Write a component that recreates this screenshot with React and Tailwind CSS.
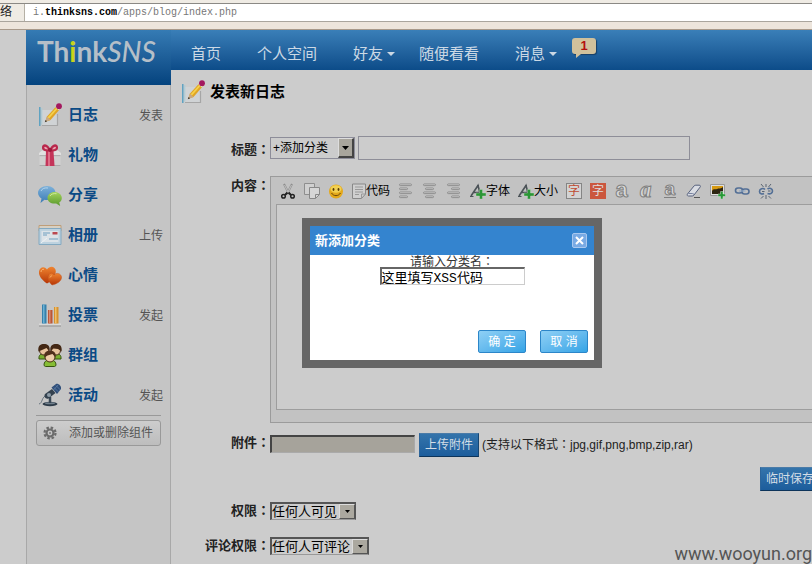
import React from "react";

const NoteIcon = () => (
  <svg className="size-6 shrink-0" viewBox="0 0 24 24" fill="none">
    <path d="M4 7h14l2 13-1 2.500H4z" fill="#d0d3d5" />
    <path d="M4 22.500h15.500V11" stroke="#a6a6a6" strokeWidth="1.200" />
    <path d="M1.800 4v19" stroke="#4d9cc0" strokeWidth="1.300" />
    <path d="M3.800 5v16.500" stroke="#a9cbd8" strokeWidth="1" />
    <path d="M7 19l2-5.500L19 2.500l3.500 3L12.500 17z" fill="#e0a526" />
    <path d="M9.500 14.500L19.500 3.500l1.200 1L11 15.500z" fill="#f6d24a" />
    <path d="M7 19l2-5.500 3.500 3.500z" fill="#c9a882" />
    <path d="M6.800 19.300l.8-2.300 1.500 1.300z" fill="#333" />
    <path d="M18 3.700l3.300 3" stroke="#d8d8d8" strokeWidth="1.600" />
    <circle cx="21" cy="3.200" r="2.900" fill="#a3185f" />
  </svg>
);

const GiftIcon = () => (
  <svg className="size-6 shrink-0" viewBox="0 0 24 24">
    <path d="M1 10l3-2.500h16L23 10v2.500H1z" fill="#e0e0e0" />
    <path d="M1.500 12h21v11h-21z" fill="#d0d0d0" />
    <path d="M1.500 12h21v1.200h-21z" fill="#b0b0b0" />
    <path d="M1.500 22h21v1h-21z" fill="#aaa" />
    <path d="M8 8h7.500l1 15h-9z" fill="#c4355a" />
    <path d="M10 8h2v15h-2z" fill="#dd6f88" />
    <path d="M12 8.500C8 9 3.500 8 4 4 4.500.5 9 0 12 5.500 15 0 19.500.5 20 4c.5 4-4 5-8 4.500z" fill="#b9284c" />
    <path d="M10 6.500c-2 0-4-.6-3.800-2.200.2-1.400 2.800-.6 3.800 2.200zM14.200 6.500c2 0 4-.6 3.800-2.200-.2-1.400-2.800-.6-3.800 2.200z" fill="#e9a5b2" />
    <circle cx="12" cy="6.800" r="2.100" fill="#9c1a3b" />
  </svg>
);

const ShareIcon = () => (
  <svg className="size-6 shrink-0" viewBox="0 0 24 24">
    <defs>
      <linearGradient id="bubbleBlue" x2="0" y2="1"><stop stopColor="#7db1da" /><stop offset="1" stopColor="#3b7bb5" /></linearGradient>
      <linearGradient id="bubbleGreen" x2="0" y2="1"><stop stopColor="#a5d35c" /><stop offset="1" stopColor="#57982c" /></linearGradient>
    </defs>
    <path d="M9 3c5 0 8.500 3 8.500 7S14 17 9 17c-1 0-1.800-.1-2.500-.3L2.500 20l1-4.500C1.500 14.200 0 12.200 0 10c0-4 4-7 9-7z" fill="url(#bubbleBlue)" />
    <path d="M16.500 9c4 0 7.300 2.600 7.300 6 0 2-1 3.500-2.600 4.600l1 3.400-4-2.400h-1.700c-4 0-7-2.300-7-5.600s3-6 7-6z" fill="url(#bubbleGreen)" />
    <path d="M3 8c1-2.500 4-3.500 7-3" stroke="#b4d3ea" fill="none" />
    <path d="M12 13c1-2 4-2.800 6.500-2.300" stroke="#cce99a" fill="none" />
  </svg>
);

const AlbumIcon = () => (
  <svg className="size-6 shrink-0" viewBox="0 0 24 24" fill="none">
    <path d="M1 2.500h22V8H1z" fill="#d7d0c3" stroke="#bf9e79" />
    <path d="M1 5.500h22v16H1z" fill="#bdd2df" stroke="#83a9c1" />
    <path d="M3.500 8h17v11h-17z" fill="#dce3e8" />
    <path d="M14.500 9h5v2.500h-5z" fill="#bb4850" />
    <path d="M5 10h7M5 12h4M11 16h9" stroke="#6f9fc0" />
    <path d="M3 20L9 15" stroke="#edf2f5" />
  </svg>
);

const MoodIcon = () => (
  <svg className="size-6 shrink-0" viewBox="0 0 24 24">
    <defs>
      <linearGradient id="heart" x2="0" y2="1"><stop stopColor="#ef8430" /><stop offset="1" stopColor="#b63606" /></linearGradient>
    </defs>
    <path d="M9 20.500C4 17 .5 13 1 8.500 1.500 4.500 6 2.500 9 6.500 12 2 17.500 3.500 17.800 8c.2 4-4 10-8.800 12.500z" fill="url(#heart)" />
    <path d="M14 22c-3-3-5-6-3.500-9.500 1-2.700 4-3 5.500-.5 2.500-3 7-1.500 7.500 2 .3 4-4.500 7-9.500 8z" fill="url(#heart)" stroke="#c2501a" strokeWidth=".5" />
    <path d="M3 9c0-2 1.500-3 3-2.700M12 14.500c.3-1.200 1-1.700 2-1.500" stroke="#f8b06e" fill="none" />
  </svg>
);

const VoteIcon = () => (
  <svg className="size-6 shrink-0" viewBox="0 0 24 24">
    <path d="M1 20.500h22v2H1z" fill="#d9d9d9" />
    <path d="M1 22.500h22v1H1z" fill="#8f8f8f" />
    <path d="M4 1.500h4.500v19H4z" fill="#3581ad" />
    <path d="M5 1.500h1.500v19H5z" fill="#6db0d1" />
    <path d="M10 7h4.500v13.500H10z" fill="#bb5638" />
    <path d="M11 7h1.500v13.500H11z" fill="#d88b70" />
    <path d="M16 4h4.500v16.500H16z" fill="#d8922f" />
    <path d="M17 4h1.500v16.500H17z" fill="#edbf6c" />
  </svg>
);

const GroupIcon = () => (
  <svg className="size-6 shrink-0" viewBox="0 0 24 24">
    <path d="M1 16c-.5-4 2-5.500 5-5.500s5 1.500 5 5.500zM13 16c0-4 2-5.500 5-5.500s5.500 1.500 5 5.500z" fill="#79ae2e" stroke="#36540f" />
    <circle cx="6" cy="7.500" r="4.500" fill="#e8c39c" stroke="#4a2d19" />
    <circle cx="18" cy="7.500" r="4.500" fill="#e8c39c" stroke="#4a2d19" />
    <path d="M.5 8.500C-.5 3.500 2 1 6 1s6.500 2.500 5.500 7L8.500 5 4 7zM12.500 8c-1-4.500 1.500-7 5.500-7s6.500 2.500 5.500 7.500L20 6l-4.500-.5z" fill="#432714" />
    <path d="M6 22.500c0-4 2-5.500 6-5.500s6 1.500 6 5.500l-1.500 1h-9z" fill="#86bd35" stroke="#36540f" />
    <circle cx="12" cy="14" r="5" fill="#efcda8" stroke="#4a2d19" />
    <path d="M6.500 14.500C5.500 9.500 8.500 7.500 12 7.500s6.500 2 5.500 7L14.500 11l-5 1.500z" fill="#51301a" />
  </svg>
);

const EventIcon = () => (
  <svg className="size-6 shrink-0" viewBox="0 0 24 24" fill="none">
    <ellipse cx="12" cy="21" rx="7.500" ry="2.200" fill="#2d3b49" />
    <ellipse cx="12" cy="20.300" rx="5" ry="1" fill="#71808d" />
    <path d="M12 20v-6" stroke="#3a4856" strokeWidth="2.500" />
    <path d="M1 21c4-1 2-7 8-9" stroke="#67737e" />
    <path d="M7 11l7-5 3.500 4-7 5.500c-3 1-5-2-3.500-4.500z" fill="#34424f" />
    <circle cx="11" cy="12" r="2" fill="#8f9da8" />
    <path d="M13.500 4.500L18 1c2-.8 5.500 1.500 5 5l-4 5z" fill="#2f4e79" />
    <path d="M16 4.500l4.500 4.500M18 2.500l4.500 4.500M15.500 7L20 2" stroke="#6485ac" strokeWidth=".7" />
  </svg>
);

const GearIcon = () => (
  <svg className="size-[14px] shrink-0" viewBox="0 0 14 14" fill="none">
    <circle cx="7" cy="7" r="5.500" stroke="#6c6c6c" strokeWidth="2.200" strokeDasharray="2.500 1.820" />
    <circle cx="7" cy="7" r="3.500" stroke="#6c6c6c" strokeWidth="2.200" />
    <circle cx="7" cy="7" r="1" fill="#777" />
  </svg>
);

const Caret = () => (
  <svg className="h-1 w-2" viewBox="0 0 8 4"><path d="M0 0h8L4 4z" fill="#cbd8e4" /></svg>
);

const Colon = () => <span className="font-['Noto_Sans_CJK_TC',sans-serif] leading-none">：</span>;

const menu = [
  { name: "日志", action: "发表", Icon: NoteIcon },
  { name: "礼物", Icon: GiftIcon },
  { name: "分享", Icon: ShareIcon },
  { name: "相册", action: "上传", Icon: AlbumIcon },
  { name: "心情", Icon: MoodIcon },
  { name: "投票", action: "发起", Icon: VoteIcon },
  { name: "群组", Icon: GroupIcon },
  { name: "活动", action: "发起", Icon: EventIcon },
];

function Tool({ label, text, children }) {
  return (
    <button type="button" aria-label={label} className="flex h-4 shrink-0 items-center text-[12px] leading-4 whitespace-nowrap text-black">
      {children}
      {text}
    </button>
  );
}

const Glyph = ({ children }) => (
  <svg className="size-4 shrink-0" viewBox="0 0 16 16" fill="none">{children}</svg>
);

const AlignGlyph = ({ x }) => (
  <Glyph>
    {[[1.5, 12], [5.5, 8], [9.5, 12], [13.5, 8]].map(([y, w], i) => (
      <rect key={i} x={w === 12 ? 1.5 : x} y={y - 0.5} width={w} height="1.600" rx=".8" stroke="#7d7d7d" fill="#d5d5d5" strokeWidth=".8" />
    ))}
  </Glyph>
);

const FontGlyph = () => (
  <Glyph>
    <path d="M1 13L8 2.500l2.500 9.500M4 9.500h5" stroke="#4c5358" strokeWidth="1.600" />
    <path d="M0 13.500h3.500M7 2.500h2" stroke="#4c5358" />
    <path d="M9.500 6.500h3V10H16v3h-3.500v3h-3v-3H6v-3h3.500z" fill="#2b9636" stroke="#c4d8c2" strokeWidth=".4" />
  </Glyph>
);

function Toolbar() {
  return (
    <div className="flex h-[27px] items-center gap-2 pl-1">
      <Tool label="剪切">
        <Glyph>
          <path d="M4 1l5 10M12 1L7 11" stroke="#8d8d8d" strokeWidth="2" />
          <path d="M4.500 2l4 8M11.500 2l-4 8" stroke="#d9d9d9" strokeWidth=".7" />
          <path d="M7.500 9.500L5 12M8.500 9.500L11 12" stroke="#222" strokeWidth="2" />
          <circle cx="3.500" cy="13.300" r="1.800" stroke="#222" strokeWidth="1.500" />
          <circle cx="12.500" cy="13.300" r="1.800" stroke="#222" strokeWidth="1.500" />
        </Glyph>
      </Tool>
      <Tool label="复制">
        <Glyph>
          <path d="M.5.500h10v11H.5z" fill="#d0d0d0" stroke="#8e8e8e" />
          <path d="M5.500 4.500h10v7l-4 4h-6z" fill="#d6d6d6" stroke="#888" />
          <path d="M15.500 11.500h-4v4" stroke="#888" />
        </Glyph>
      </Tool>
      <Tool label="表情">
        <Glyph>
          <circle cx="8" cy="8.500" r="7" fill="#e4a91c" />
          <ellipse cx="8" cy="6" rx="5.500" ry="3.800" fill="#f2d052" />
          <ellipse cx="5.500" cy="6.500" rx=".9" ry="1.400" fill="#563a08" />
          <ellipse cx="10.500" cy="6.500" rx=".9" ry="1.400" fill="#563a08" />
          <path d="M3.500 10c2 3.500 7 3.500 9 0" stroke="#704806" />
        </Glyph>
      </Tool>
      <Tool label="代码" text="代码">
        <svg className="h-4 w-[14px] shrink-0" viewBox="0 0 14 16" fill="none">
          <path d="M.5 1h13v10l-4 4.500h-9z" fill="#cfcfcf" stroke="#888" />
          <path d="M3 4h8M3 6.500h8M3 9h8M3 11.500h4M13.500 11h-4v4.500" stroke="#999" />
        </svg>
      </Tool>
      <Tool label="左对齐"><AlignGlyph x={1.5} /></Tool>
      <Tool label="居中"><AlignGlyph x={3.5} /></Tool>
      <Tool label="右对齐"><AlignGlyph x={5.5} /></Tool>
      <Tool label="字体" text="字体"><FontGlyph /></Tool>
      <Tool label="大小" text="大小"><FontGlyph /></Tool>
      <Tool label="文字颜色">
        <span className="flex size-4 items-center justify-center border border-[#858585] bg-[#d3d3d3] text-[12px] leading-3 text-[#bf4b32]">字</span>
      </Tool>
      <Tool label="背景颜色">
        <span className="flex size-4 items-center justify-center bg-[#cb573e] text-[12px] leading-3 text-[#ddd]">字</span>
      </Tool>
      <Tool label="粗体">
        <Glyph><text x="1.500" y="14" fontFamily="Liberation Sans" fontWeight="bold" fontSize="22" fill="#d8d8d8" stroke="#808080" strokeWidth="1">a</text></Glyph>
      </Tool>
      <Tool label="斜体">
        <Glyph><text x="2" y="14" fontFamily="Liberation Serif" fontStyle="italic" fontWeight="bold" fontSize="23" fill="#d8d8d8" stroke="#808080" strokeWidth="1">a</text></Glyph>
      </Tool>
      <Tool label="下划线">
        <Glyph>
          <text x="2.500" y="12" fontFamily="Liberation Sans" fontWeight="bold" fontSize="19" fill="#d8d8d8" stroke="#808080" strokeWidth="1">a</text>
          <path d="M2 14.500h12" stroke="#808080" />
        </Glyph>
      </Tool>
      <Tool label="清除格式">
        <Glyph>
          <path d="M1.500 11L8 3c.5-.6 1-.8 1.800-.8h3.400c1.300 0 1.600 1 .9 1.900L8 12c-.5.600-1 1-1.800 1H2.500c-1.300 0-1.700-1-1-2z" fill="#d9dce3" stroke="#56617d" />
          <path d="M2.500 10.500h4c1 0 1.500.5 1.200 1.300" stroke="#7782a0" />
          <path d="M8 14.500h6" stroke="#555" />
        </Glyph>
      </Tool>
      <Tool label="插入图片">
        <Glyph>
          <path d="M.5 1.500h14v11H.5z" fill="#ddd" stroke="#999" />
          <path d="M2 3h11v8H2z" fill="#d69a13" />
          <path d="M2 8c2-3 3-1 5-2s4 0 6-2v7H2z" fill="#2d2512" />
          <path d="M10.500 8.500h2.500V11h2.500v2.500H13V16h-2.500v-2.500H8V11h2.500z" fill="#279a37" stroke="#d3e2d0" strokeWidth=".5" />
        </Glyph>
      </Tool>
      <Tool label="链接">
        <Glyph>
          <rect x="1.500" y="5" width="7" height="5" rx="2.500" stroke="#536f96" strokeWidth="1.600" />
          <rect x="8" y="6" width="7" height="5" rx="2.500" stroke="#536f96" strokeWidth="1.600" />
          <path d="M5 8h6.500" stroke="#93aac6" strokeWidth="1.200" />
        </Glyph>
      </Tool>
      <Tool label="取消链接">
        <Glyph>
          <path d="M7 6.500C5 4.500 1.500 6 1.500 8.500S4 11.500 6 10.500M9.500 6c2-1.500 5-.5 5 2s-2.500 3.500-5 2.500" stroke="#536f96" strokeWidth="1.600" />
          <path d="M4 8.500h2.500M10 8h2.500M8 1v3M8 12v4M3 1l2.500 3M13 1l-2.500 3M3 15.500L5.500 13M13 15.500L10.500 13" stroke="#5b6572" />
        </Glyph>
      </Tool>
    </div>
  );
}

const Label = ({ id, children }) => (
  <label htmlFor={id} className="h-5 w-[99px] shrink-0 text-right text-[13px] leading-5 font-bold whitespace-nowrap text-[#222]">{children}<Colon /></label>
);

function SunkenSelect({ id, value, width }) {
  return (
    <div className={`relative h-[18px] border border-t-2 border-l-2 border-[#555] border-b-[#999] ${width}`}>
      <select id={id} className="block h-[15px] w-full appearance-none bg-[#cdcdcd] text-[13px] leading-[15px] text-black">
        <option>{value}</option>
      </select>
      <span className="pointer-events-none absolute top-0 right-0 flex h-[15px] w-4 items-center justify-center border border-t-[#ddd] border-r-[#555] border-b-[#555] border-l-[#ddd] bg-[#aba89f]">
        <svg className="h-[3px] w-[5px]" viewBox="0 0 5 3"><path d="M0 0h5L2.500 3z" fill="#000" /></svg>
      </span>
    </div>
  );
}

const blueButton = "h-6 shrink-0 border border-t-[#4a7ba8] border-r-[#174672] border-b-[#0c3359] border-l-[#2c659b] bg-linear-to-b from-[#3474ab] to-[#1c5d9c] text-[12px] leading-5 whitespace-nowrap text-[#d3dde6]";
const dialogButton = "h-[23px] w-12 rounded-xs border border-[#2c86c9] bg-linear-to-br from-[#8ed0f5] to-[#32a4e6] text-[12px] leading-5 text-white";

export default function App() {
  return (
    <div className="relative flex min-h-screen flex-col overflow-hidden bg-[#ccc] font-['Liberation_Sans','Noto_Sans_CJK_SC',sans-serif]">
      <div className="bg-[#efebe4] pt-[3px]">
        <div className="flex h-[19px] border-t border-b border-t-[#8b8985] border-b-[#aaa59d]">
          <span className="flex w-[25px] shrink-0 justify-end overflow-hidden border-r border-[#b5b0a5] pr-3 text-[12px] leading-[17px] whitespace-nowrap text-[#222]">网络</span>
          <div className="flex-1 bg-white pl-2 font-['Liberation_Mono',monospace] text-[10px] leading-[17px] text-[#777]">
            i.<span className="font-bold text-black">thinksns.com</span>/apps/blog/index.php
          </div>
        </div>
        <div className="h-[8px] border-b border-[#a8998a] bg-[#ede5dc]" />
      </div>

      <div className="flex flex-1 pl-[26px]">
        <aside className="flex w-[145px] shrink-0 flex-col">
          <div className="h-[55px] bg-linear-to-b from-[#357bb4] to-[#04437e] pl-[11px]">
            <a href="#" className="font-['Lato',sans-serif] text-[28px] leading-[42px] font-bold whitespace-nowrap text-[#b5bfc8]">
              Th<span className="text-[#c8d41c]">i</span>nk<span className="font-medium italic">SNS</span>
            </a>
          </div>
          <nav className="flex-1 border-r border-l border-[#a8a8a8] bg-[#c5c5c5] px-[9px] pt-[10px]">
            {menu.map(({ name, action, Icon }) => (
              <div key={name} className="flex h-10 items-center pl-0.5">
                <Icon />
                <a href="#" className="ml-[6px] text-[15px] leading-5 font-bold text-[#0b4a85]">{name}</a>
                {action && <a href="#" className="-mr-[2px] ml-auto pt-0.5 text-[12px] leading-5 text-[#555]">{action}</a>}
              </div>
            ))}
            <div className="mb-1 border-t border-[#999]" />
            <button type="button" className="flex h-[26px] w-full items-center rounded-[3px] border border-[#999] bg-linear-to-b from-[#cdcdcd] to-[#bdbdbd] pl-[6px] text-[12px] whitespace-nowrap text-[#555]">
              <GearIcon />
              <span className="ml-[12px]">添加或删除组件</span>
            </button>
          </nav>
        </aside>

        <main className="min-w-0 flex-1">
          <nav className="flex h-10 items-center bg-linear-to-b from-[#3a7fb8] to-[#0c4c89] pt-2 pl-5 text-[15px] leading-5 whitespace-nowrap text-[#ccd9e5]">
            <a href="#" className="pr-9">首页</a>
            <a href="#" className="pr-9">个人空间</a>
            <a href="#" className="flex items-center gap-1 pr-6">好友<Caret /></a>
            <a href="#" className="pr-9">随便看看</a>
            <a href="#" className="flex items-center gap-1 pr-[15px]">消息<Caret /></a>
            <span className="relative mb-4 h-4 w-6 rounded-[3px] bg-[#d1c19c] text-center font-['Liberation_Sans'] text-[13px] leading-4 font-bold text-[#b40e0e] shadow-[1px_1px_1px_#173f66]">
              1
              <svg className="absolute top-4 left-1 h-1 w-[5px]" viewBox="0 0 5 4"><path d="M0 0h5L0 4z" fill="#d1c19c" /></svg>
            </span>
          </nav>

          <h1 className="flex items-center gap-[5px] pt-[10px] pl-[10px] text-[15px] leading-6 font-bold text-black">
            <NoteIcon />
            发表新日志
          </h1>

          <form className="pt-8" onSubmit={(e) => e.preventDefault()}>
            <div className="flex items-end">
              <Label id="title">标题</Label>
              <div className="relative mb-px h-[22px] w-[85px] shrink-0 border border-[#8d8d99]">
                <select aria-label="分类" className="block h-5 w-full appearance-none bg-transparent pl-0.5 text-[12px] leading-5 text-black">
                  <option>+添加分类</option>
                </select>
                <span className="pointer-events-none absolute top-0 right-0 flex h-5 w-4 items-center justify-center border border-t-[#ddd] border-r-2 border-r-[#444] border-b-2 border-b-[#444] border-l-[#ddd] bg-[#a8a59c]">
                  <svg className="h-1 w-[7px]" viewBox="0 0 7 4"><path d="M0 0h7L3.500 4z" fill="#000" /></svg>
                </span>
              </div>
              <input id="title" className="ml-[3px] h-6 w-[332px] border border-[#8e8e98] bg-transparent px-1 text-[12px]" />
            </div>

            <div className="mt-4 flex items-start">
              <Label id="content">内容</Label>
              <div className="h-[247px] min-w-0 flex-1 overflow-hidden border border-r-0 border-[#9b9b9b] bg-[#c2c2c2] pl-[5px]">
                <Toolbar />
                <textarea id="content" className="block h-[206px] w-full resize-none border border-r-0 border-[#9d9d9d] bg-[#ccc] p-1 text-[12px]" />
              </div>
            </div>

            <div className="mt-[10px] flex items-start">
              <Label id="file">附件</Label>
              <input id="file" readOnly className="mt-[2px] h-[18px] w-[145px] shrink-0 border border-t-2 border-l-2 border-[#444] border-r-[#aaa] border-b-[#aaa] bg-[#a6a39b]" />
              <button type="button" className={`ml-1 w-[60px] ${blueButton}`}>上传附件</button>
              <span className="ml-[3px] h-6 text-[12px] leading-6 whitespace-nowrap text-[#222]">(支持以下格式<Colon />jpg,gif,png,bmp,zip,rar)</span>
            </div>

            <div className="mt-[10px] flex justify-end overflow-hidden">
              <button type="button" className={`-mr-2 w-[60px] ${blueButton}`}>临时保存</button>
            </div>

            <div className="mt-[10px] flex items-center">
              <Label id="privacy">权限</Label>
              <SunkenSelect id="privacy" value="任何人可见" width="w-[86px]" />
            </div>
            <div className="mt-[15px] flex items-center">
              <Label id="comments">评论权限</Label>
              <SunkenSelect id="comments" value="任何人可评论" width="w-[99px]" />
            </div>
          </form>
        </main>
      </div>

      <div role="dialog" aria-labelledby="dialog-title" className="absolute top-[218px] left-[302px] flex h-[150px] w-[300px] flex-col border-8 border-[#666] bg-white">
        <div className="flex h-[29px] items-center justify-between bg-[#3484cf] pr-[7px] pl-[5px]">
          <h2 id="dialog-title" className="text-[13px] leading-5 font-bold text-white">新添加分类</h2>
          <button type="button" aria-label="关闭" className="flex size-[15px] items-center justify-center rounded-xs border border-[#a9c8ef] bg-[#79aae4]">
            <svg className="size-[9px]" viewBox="0 0 9 9"><path d="M1 1l7 7M8 1L1 8" stroke="#fff" strokeWidth="2" /></svg>
          </button>
        </div>
        <div className="flex flex-col items-center">
          <label htmlFor="category" className="h-3 text-[12px] leading-3 text-[#333]">请输入分类名<Colon /></label>
          <input id="category" defaultValue="这里填写XSS代码" className="h-[18px] w-[145px] border border-t-2 border-l-2 border-[#666] border-r-[#ccc] border-b-[#ccc] bg-white font-['Liberation_Mono','Noto_Sans_CJK_SC',monospace] text-[13px] leading-[15px] text-black" />
        </div>
        <div className="mt-auto flex justify-end gap-[14px] pr-[6px] pb-[7px]">
          <button type="button" className={dialogButton}>确 定</button>
          <button type="button" className={dialogButton}>取 消</button>
        </div>
      </div>

      <span className="absolute right-0 bottom-0 font-['Roboto',sans-serif] text-[18px] leading-5 text-[#555]">www.wooyun.org</span>
    </div>
  );
}
